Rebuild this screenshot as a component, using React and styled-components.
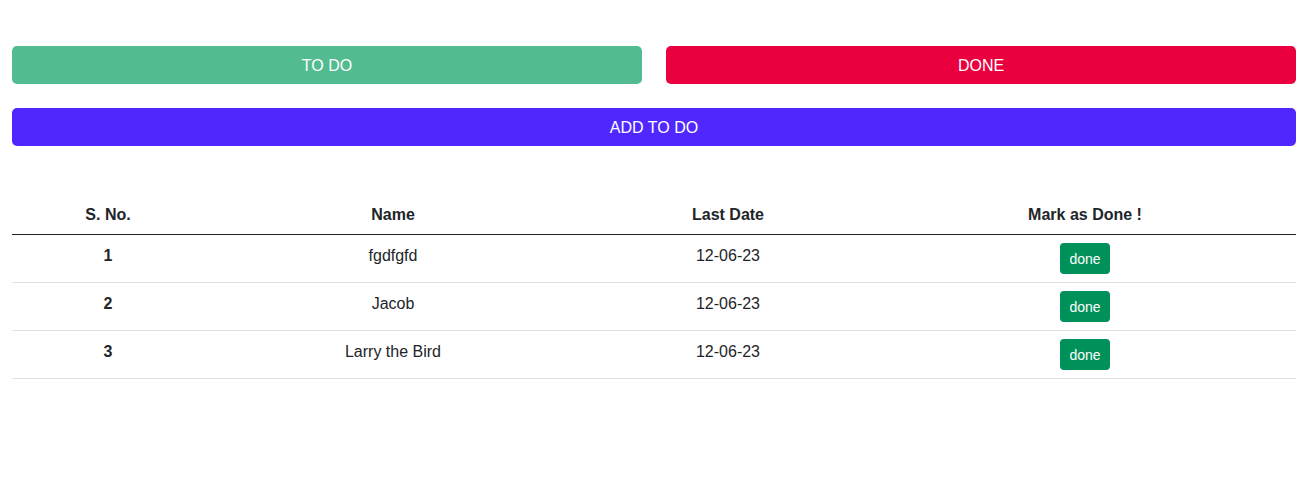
import styled, { createGlobalStyle } from "styled-components";

const GlobalStyle = createGlobalStyle`
  *, *::before, *::after {
    box-sizing: border-box;
  }
  body {
    margin: 0;
    background: #fff;
    color: #212529;
    font-family: "Liberation Sans", Arial, sans-serif;
    font-size: 16px;
    line-height: 1.5;
  }
`;

const Page = styled.div`
  padding: 46px 11px 0 12px;
`;

const Row = styled.div`
  display: grid;
  grid-template-columns: 1fr 1fr;
  gap: 24px;
`;

const Button = styled.button`
  display: block;
  width: 100%;
  height: 38px;
  padding-top: 2px;
  border: none;
  border-radius: 5px;
  background: ${({ $bg }) => $bg};
  color: #fff;
  font-family: inherit;
  font-size: 16px;
  text-transform: uppercase;
  cursor: pointer;
`;

const AddButton = styled(Button)`
  margin-top: 24px;
`;

const Table = styled.table`
  width: 100%;
  margin-top: 48px;
  border-collapse: collapse;
  table-layout: fixed;
  text-align: center;
`;

const Th = styled.th`
  width: ${({ $w }) => $w}px;
  padding: 9px 8px 7px;
  font-weight: 700;
  border-bottom: 1px solid #212529;
`;

const Td = styled.td`
  padding: 9px 8px 7px;
  vertical-align: top;
  font-weight: ${({ $bold }) => ($bold ? 700 : 400)};
  border-bottom: 1px solid #dee2e6;
`;

const SmallButton = styled.button`
  height: 31px;
  margin: -1px 0 1px;
  padding: 1px 9px 0;
  border: none;
  border-radius: 4px;
  background: #00915a;
  color: #fff;
  font-family: inherit;
  font-size: 14px;
  vertical-align: top;
  cursor: pointer;
`;

const todos = [
  { id: 1, name: "fgdfgfd", date: "12-06-23" },
  { id: 2, name: "Jacob", date: "12-06-23" },
  { id: 3, name: "Larry the Bird", date: "12-06-23" },
];

export default function App() {
  return (
    <>
      <GlobalStyle />
      <Page>
        <Row>
          <Button $bg="#52bb8f">To Do</Button>
          <Button $bg="#ea003f">Done</Button>
        </Row>
        <AddButton $bg="#5028ff">Add To Do</AddButton>
        <Table>
          <thead>
            <tr>
              <Th $w={192}>S. No.</Th>
              <Th $w={378}>Name</Th>
              <Th $w={292}>Last Date</Th>
              <Th $w={422}>Mark as Done !</Th>
            </tr>
          </thead>
          <tbody>
            {todos.map((t) => (
              <tr key={t.id}>
                <Td $bold>{t.id}</Td>
                <Td>{t.name}</Td>
                <Td>{t.date}</Td>
                <Td>
                  <SmallButton>done</SmallButton>
                </Td>
              </tr>
            ))}
          </tbody>
        </Table>
      </Page>
    </>
  );
}
